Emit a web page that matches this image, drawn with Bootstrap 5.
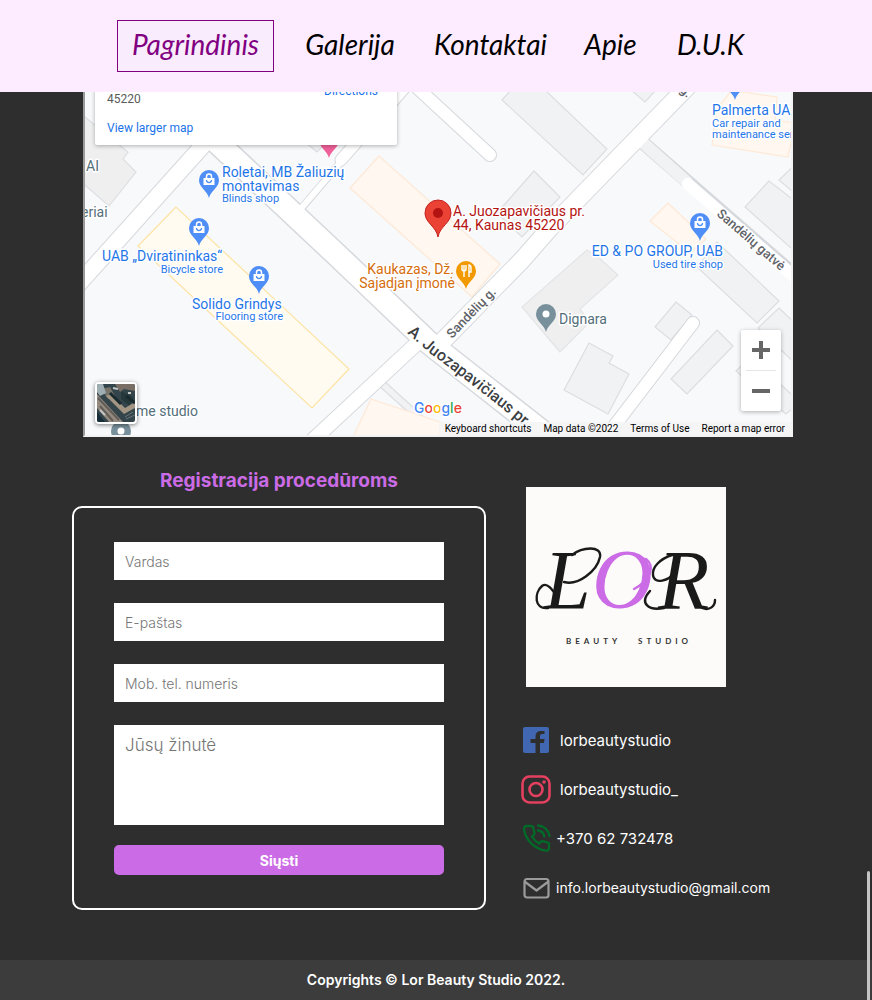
<!DOCTYPE html>
<html lang="lt">
<head>
<meta charset="utf-8">
<meta name="viewport" content="width=device-width, initial-scale=1">
<title>Lor Beauty Studio</title>
<link rel="stylesheet" href="https://cdn.jsdelivr.net/npm/bootstrap@5.3.0/dist/css/bootstrap.min.css">
<style>
  body { background: #2e2e2e; color: #fff; font-family: Inter, "Open Sans", sans-serif; }
  .site-header { background: #fdebff; padding: 20px 16px; }
  .site-nav { display: grid; grid-template-columns: 157fr 152fr 129fr 111fr 89fr; max-width: 638px; }
  .site-nav a { color: #000; font: italic 28px/46px Lato, sans-serif; padding-bottom: 4px; border: 1px solid transparent; text-align: center; text-decoration: none; white-space: nowrap; }
  .site-nav a.active { color: #800080; border-color: #800080; background: #f9ecfd; }

  .map-frame { margin: 0 79px 0 83px; height: 345px; border: 2px solid #f2f2f2; border-top: 0; border-left-color: #9a9a9a; background: #f8f9fb; font-family: Roboto, sans-serif; }
  .map-art { width: 100%; height: 100%; display: block; }
  .map-art text { font-size: 14px; }
  .halo { paint-order: stroke; stroke: #fff; stroke-width: 3px; stroke-linejoin: round; }
  .map-art .tag { font-size: 11px; }
  .map-art .street { font-size: 13px; font-weight: 500; }
  .map-art .avenue { font-size: 16px; font-weight: 500; }
  .map-art .map-brand { font: 500 14px Inter, sans-serif; }
  .place-box { top: -40px; left: 10px; width: 302px; height: 93px; padding: 31px 19px 0 12px; background: #fff; border-radius: 2px; box-shadow: 0 1px 4px rgba(0,0,0,.3); font-size: 12px; line-height: 16px; color: #5b5b5b; }
  .place-box a { color: #1a73e8; text-decoration: none; }
  .address { padding-top: 8px; }
  .address a { margin-top: 13px; }
  .zoom-box { right: 10px; bottom: 24px; width: 40px; background: #fff; border-radius: 2px; box-shadow: 0 1px 4px rgba(0,0,0,.3); }
  .zoom-box button { height: 40px; border: 0; background: none; padding: 0; }
  .zoom-box hr { margin: 0 5px; color: #e6e6e6; opacity: 1; }
  .layer-btn { left: 10px; bottom: 11px; width: 42px; height: 42px; padding: 0; border: 2px solid #fff; border-radius: 4px; box-shadow: 0 1px 4px rgba(0,0,0,.5); overflow: hidden; }
  .map-terms { right: 0; bottom: 0; font-size: 10px; line-height: 13px; }
  .map-terms a, .map-terms span { color: #000; background: rgba(245,245,245,.85); padding: 0 6px; text-decoration: none; white-space: nowrap; }

  .contact-grid { display: grid; grid-template-columns: 414fr 279fr; gap: 35px; padding: 32px 72px 50px; }
  .form-title { color: #cb6ce6; font-size: 19px; line-height: 24px; font-weight: 700; margin-bottom: 13px; }
  .form-box { border: 2px solid #fff; border-radius: 10px; padding: 34px 40px 33px; }
  .form-box .form-control { border: 0; border-radius: 0; padding: 0 11px; height: 38px; font-size: 14px; margin-bottom: 23px; }
  .form-box textarea.form-control { height: 100px; padding: 8px 11px; font-size: 17px; line-height: 24px; margin-bottom: 20px; resize: none; }
  .form-box .form-control::placeholder { color: #757575; font-weight: 300; opacity: 1; }
  .send-btn { background: #cb6ce6; color: #fff; height: 30px; border: 0; border-radius: 5px; padding: 0; font-size: 14px; font-weight: 700; }
  .brand-logo { width: 200px; height: 200px; margin: 18px 0 38px 5px; }
  .contact-list { gap: 17px; font-size: 15px; line-height: 32px; }
  .contact-list a { color: #fff; text-decoration: none; white-space: nowrap; }
  .contact-list .mail-link { font-size: 14px; }
  .site-footer { background: #3c3c3c; font-size: 14px; line-height: 40px; font-weight: 600; }
  .scroll-thumb { right: 2px; bottom: 0; width: 3px; height: 129px; background: #c4c4c4; border-radius: 2px 2px 0 0; }
</style>
</head>
<body>
<header class="site-header sticky-top">
  <nav class="site-nav mx-auto">
    <a href="#" class="active">Pagrindinis</a>
    <a href="#">Galerija</a>
    <a href="#">Kontaktai</a>
    <a href="#">Apie</a>
    <a href="#">D.U.K</a>
  </nav>
</header>

<main>
  <section class="map-frame position-relative overflow-hidden">
    <svg class="map-art" viewBox="85 92 706 343" preserveAspectRatio="xMidYMid slice" role="img" aria-label="Map">
      <defs>
        <path id="pin" d="M0 18C-2 10-10 8-10 0A10 10 0 0 1 10 0C10 8 2 10 0 18z"/>
        <g id="bag"><use href="#pin" fill="#4f8ef7"/><path d="M-2.500-2v-1.500a2.500 2.500 0 0 1 5 0V-2" fill="none" stroke="#fff" stroke-width="1.500"/><path d="M-5.500-2h11v7h-11z" fill="#fff"/><path d="M-2.500 0a2.500 2.500 0 0 0 5 0" fill="none" stroke="#4f8ef7" stroke-width="1.300"/></g>
        <path id="avenue-line" d="M407 333L431 354Q470 383 503 409L560 456"/>
      </defs>
      <rect x="60" y="80" width="760" height="380" fill="#f8f9fb"/>
      <g fill="#f1f2f4" stroke="#dcdee1" stroke-width="1.200">
        <path d="M80 113L128 152L123 159L136 172L109 206L80 181z" fill="#efeff0"/>
        <path d="M502 100L511 90H545L607 149L583 175z"/>
        <path d="M631 90L645 102L656 90z"/>
        <path d="M534 171L560 197L522 237L497 213z"/>
        <path d="M587 250L598 257L618 275L580 309L590 322L560 352L522 307z" fill="#efeff0" stroke="#e4e5e7"/>
        <path d="M589 343L613 356L609 363L629 374L608 414L564 390z"/>
        <path d="M676 302L692 315L671 340L655 327z"/>
        <path d="M717 330L733 346L687 394L671 379z"/>
        <path d="M717 242L779 301L757 323L697 267z"/>
        <path d="M779 308L800 328V368L758 328z"/>
        <path d="M736 371L750 357L800 402L786 414z"/>
        <path d="M769 181L745 207L800 256V205z"/>
        <path d="M779 180L800 160V198z"/>
        <path d="M305 142L317 152L327 142z"/>
        <path d="M383 380L446 437H436L378 385z"/>
      </g>
      <g fill="#fff7f0" stroke="#fee9d6" stroke-width="1.200">
        <path d="M379 156L350 188L472 297L500 264z"/>
        <path d="M668 203L650 221L690 253L706 239z"/>
        <path d="M732 90L743 92L777 97L775 120L795 123L788 157L712 145L716 110z"/>
        <path d="M371 399L353 437H460L440 422z"/>
        <path d="M176 207L138 246L312 408L349 369z" fill="#fffbf0" stroke="#fde3a4"/>
      </g>
      <!-- streets: grey casing first, white surface over it -->
      <g fill="none" stroke="#d5d8dc" stroke-linejoin="round">
        <path d="M190 117L338 256L428 342L475 379L545 434" stroke-width="25"/>
        <path d="M75 288L215 132" stroke-width="18"/>
        <path d="M300 452L427 334" stroke-width="16"/>
        <path d="M430 354L522 260L550 228L690 84" stroke-width="19"/>
        <path d="M412 83L490 155" stroke-width="14" stroke-linecap="round"/>
        <path d="M300 210L340 163" stroke-width="8"/>
        <path d="M341 160L408 84" stroke-width="13" stroke-linecap="round"/>
        <path d="M641 141L805 284" stroke-width="14"/>
        <path d="M602 442L693 323" stroke-width="14" stroke-linecap="round"/>
      </g>
      <g fill="none" stroke="#fff" stroke-linejoin="round">
        <path d="M641 141L688 183" stroke="#f1f2f4" stroke-width="12"/>
        <path d="M688 184L805 286" stroke-width="12" stroke-linecap="round"/>
        <path d="M190 117L338 256L428 342L475 379L545 434" stroke-width="22"/>
        <path d="M75 288L215 132" stroke-width="16"/>
        <path d="M300 452L427 334" stroke-width="14"/>
        <path d="M430 354L522 260L550 228L690 84" stroke-width="17"/>
        <path d="M412 83L490 155" stroke-width="12" stroke-linecap="round"/>
        <path d="M298 212L340 163" stroke-width="6"/>
        <path d="M341 160L408 84" stroke-width="11" stroke-linecap="round"/>
        <path d="M602 442L693 323" stroke-width="12" stroke-linecap="round"/>
      </g>
      <use href="#bag" x="209" y="180"/><use href="#bag" x="199" y="228"/><use href="#bag" x="259" y="276"/><use href="#bag" x="700" y="223"/><use href="#bag" x="735" y="82"/>
      <use href="#pin" x="329" y="140" fill="#f0609a"/>
      <use href="#pin" x="466" y="271" fill="#f29900"/>
      <path d="M462 265v4q0 2 2 2v6M464 265v6M466 265v4q0 2-2 2M469 277v-12q2 0 2 3v4h-2" fill="none" stroke="#fff" stroke-width="1.400"/>
      <use href="#pin" x="546" y="314" fill="#78909c"/><circle cx="546" cy="314" r="3.500" fill="#fff"/>
      <use href="#pin" x="121" y="431" fill="#78909c"/><circle cx="121" cy="431" r="3.500" fill="#fff"/>
      <path d="M438 237C436 226 425 223 425 213A13 13 0 0 1 451 213C451 223 440 226 438 237z" fill="#ea4335" stroke="#c5221f"/><circle cx="438" cy="213" r="5" fill="#b31412"/>
      <g class="halo" fill="#1f76e8">
        <text x="222" y="177">Roletai, MB Žaliuzių</text><text x="222" y="191">montavimas</text><text class="tag" x="222" y="202">Blinds shop</text>
        <text x="102" y="261">UAB „Dviratininkas“</text><text class="tag" x="223" y="273" text-anchor="end">Bicycle store</text>
        <text x="192" y="309">Solido Grindys</text><text class="tag" x="283" y="320" text-anchor="end">Flooring store</text>
        <text x="723" y="256" text-anchor="end">ED &amp; PO GROUP, UAB</text><text class="tag" x="723" y="268" text-anchor="end">Used tire shop</text>
        <text x="712" y="115">Palmerta UA</text><text class="tag" x="712" y="127">Car repair and</text><text class="tag" x="712" y="138">maintenance ser</text>
      </g>
      <g class="halo" fill="#b31412"><text x="453" y="216">A. Juozapavičiaus pr.</text><text x="453" y="230">44, Kaunas 45220</text></g>
      <g class="halo" fill="#d56e0c"><text x="454" y="274" text-anchor="end">Kaukazas, Dž.</text><text x="455" y="288" text-anchor="end">Sajadjan įmonė</text></g>
      <g class="halo" fill="#546e7a"><text x="559" y="324">Dignara</text><text x="136" y="416">me studio</text><text x="86" y="171">AI</text><text x="81" y="217">eriai</text></g>
      <g class="halo" fill="#5f6368">
        <text class="street" transform="translate(452 339) rotate(-46)">Sandėlių g.</text>
        <text class="street" transform="translate(716 215) rotate(41)">Sandėlių gatvė</text>
        <text class="street" transform="translate(679 91) rotate(41)">g.</text>
        <text class="avenue" fill="#3c4043"><textPath href="#avenue-line">A. Juozapavičiaus pr.</textPath></text>
      </g>
      <text x="414" y="413" class="halo map-brand"><tspan fill="#4285f4">G</tspan><tspan fill="#ea4335">o</tspan><tspan fill="#fbbc04">o</tspan><tspan fill="#4285f4">g</tspan><tspan fill="#34a853">l</tspan><tspan fill="#ea4335">e</tspan></text>
    </svg>
    <div class="place-box position-absolute d-flex justify-content-between">
      <div class="address"><div>45220</div><a href="#" class="d-block">View larger map</a></div>
      <a href="#">Directions</a>
    </div>
    <button type="button" class="layer-btn position-absolute" aria-label="Satellite imagery">
      <svg width="38" height="38" viewBox="0 0 38 38" class="d-block">
        <rect width="38" height="38" fill="#33444a"/>
        <path d="M0 10L26 38H12L0 24z" fill="#948a80"/>
        <path d="M1 14L22 36M3 22L16 37" stroke="#615d57" stroke-width="2"/>
        <path d="M4 5L13 3L18 12L11 15z" fill="#76736a"/><path d="M0 0H6L9 9L3 12L0 8z" fill="#9faeb2"/>
        <path d="M18 0H38V7L27 5L23 8z" fill="#786e66"/><path d="M24 7L36 13L33 22L24 15z" fill="#25383b"/>
        <path d="M9 12L14 10L28 24L38 18V24L27 30z" fill="#a29583"/><path d="M13 9L24 20M29 12L38 19" stroke="#1a2b30" stroke-width="3"/>
        <path d="M0 28L8 38H0z" fill="#172e38"/><path d="M28 33L36 28M29 35L38 31" stroke="#68777a" stroke-width="1"/>
        <path d="M3 26L8 31M16 4L21 5M31 9h3" stroke="#c4c6c3" stroke-width="2"/>
      </svg>
    </button>
    <div class="zoom-box position-absolute d-flex flex-column">
      <button type="button" aria-label="Zoom in"><svg width="18" height="18" class="d-block mx-auto"><path d="M9 0v18M0 9h18" stroke="#666" stroke-width="4"/></svg></button>
      <hr>
      <button type="button" aria-label="Zoom out"><svg width="18" height="18" class="d-block mx-auto"><path d="M0 9h18" stroke="#666" stroke-width="4"/></svg></button>
    </div>
    <div class="map-terms position-absolute d-flex">
      <a href="#">Keyboard shortcuts</a><span>Map data ©2022</span><a href="#">Terms of Use</a><a href="#">Report a map error</a>
    </div>
  </section>

  <section class="contact-grid">
    <div>
      <h2 class="form-title text-center">Registracija procedūroms</h2>
      <form class="form-box">
        <input type="text" class="form-control" placeholder="Vardas" aria-label="Vardas">
        <input type="email" class="form-control" placeholder="E-paštas" aria-label="E-paštas">
        <input type="tel" class="form-control" placeholder="Mob. tel. numeris" aria-label="Mob. tel. numeris">
        <textarea class="form-control" placeholder="Jūsų žinutė" aria-label="Jūsų žinutė"></textarea>
        <button type="submit" class="send-btn w-100 d-block">Siųsti</button>
      </form>
    </div>
    <div>
      <svg class="brand-logo d-block" viewBox="0 0 200 200" role="img" aria-label="LOR Beauty Studio">
        <rect width="200" height="200" fill="#fcfbf9"/>
        <g font-family="Liberation Serif, serif" font-style="italic" font-size="84" fill="#1a1a1a">
          <text x="18" y="122">L</text>
          <text x="132" y="122">R</text>
          <text x="66" y="121" fill="#cb6ce6">O</text>
        </g>
        <!-- pen flourishes around the initials -->
        <g fill="none" stroke="#1a1a1a" stroke-width="2.400" stroke-linecap="round">
          <path d="M46 68C56 60 76 58 74 70C71 84 52 99 38 95"/>
          <path d="M22 121C8 123 8 106 16 99C21 95 26 102 32 111"/>
          <path d="M146 68C134 72 126 80 127 88C128 98 143 94 149 85"/>
          <path d="M138 121C122 124 113 116 124 104"/>
          <path d="M176 121C184 124 189 119 189 113"/>
        </g>
        <path d="M120 72C129 79 125 93 108 102" fill="none" stroke="#cb6ce6" stroke-width="2.400" stroke-linecap="round"/>
        <g font-family="Lato, sans-serif" font-size="8" font-weight="700" letter-spacing="4" fill="#333"><text x="40" y="157">BEAUTY</text><text x="112" y="157">STUDIO</text></g>
      </svg>
      <div class="contact-list d-flex flex-column align-items-start">
        <a href="#" class="d-flex align-items-center gap-2">
          <svg width="31" height="32" viewBox="0 0 31 32"><path d="M4 2h22q2 0 2 2v22q0 2-2 2h-7v-10h4l.6-4H19v-3q0-2 2-2h2.500V6H20q-5.500 0-5.500 5.500V14H9.500v4h5v10H4q-2 0-2-2V4q0-2 2-2z" fill="#4267b2"/></svg>lorbeautystudio</a>
        <a href="#" class="d-flex align-items-center gap-2">
          <svg width="31" height="32" viewBox="0 0 31 32" fill="none" stroke="#e4405f" stroke-width="2.600"><rect x="1.500" y="2.500" width="27" height="26" rx="7"/><circle cx="15" cy="15.500" r="6.500"/><circle cx="23" cy="8" r="1.800" fill="#e4405f" stroke="none"/></svg>lorbeautystudio_</a>
        <a href="tel:+37062732478" class="d-flex align-items-center gap-1">
          <svg width="31" height="32" viewBox="0 0 31 32" fill="none" stroke="#006b28" stroke-width="2.300" stroke-linecap="round" stroke-linejoin="round"><path d="M17 2.500A12 12 0 0 1 28.500 13M17 7.500a7 7 0 0 1 6.300 6M28 20.500v4.500a2.700 2.700 0 0 1-3 2.700A26 26 0 0 1 3 6.200A2.700 2.700 0 0 1 5.700 3h4a2.700 2.700 0 0 1 2.700 2.300q.3 2 1 3.800a2.700 2.700 0 0 1-.6 2.800L11 13.600a21 21 0 0 0 7 7l1.600-1.700a2.700 2.700 0 0 1 2.800-.6q1.800.7 3.700 1a2.700 2.700 0 0 1 1.900 1.200z"/></svg>+370 62 732478</a>
        <a href="mailto:info.lorbeautystudio@gmail.com" class="mail-link d-flex align-items-center gap-1">
          <svg width="31" height="32" viewBox="0 0 31 32" fill="none" stroke="#9b9b9b" stroke-width="2.200" stroke-linejoin="round"><rect x="3.500" y="7" width="24" height="18.500" rx="2.500"/><path d="M3.500 9.500L15.500 18.500L27.500 9.500"/></svg>info.lorbeautystudio@gmail.com</a>
      </div>
    </div>
  </section>
</main>

<footer class="site-footer text-center">Copyrights © Lor Beauty Studio 2022.</footer>
<div class="scroll-thumb position-fixed"></div>
<script src="https://cdn.jsdelivr.net/npm/bootstrap@5.3.0/dist/js/bootstrap.bundle.min.js"></script>
</body>
</html>
